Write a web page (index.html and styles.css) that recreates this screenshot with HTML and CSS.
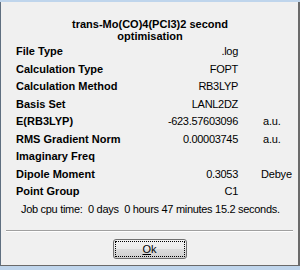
FILE: index.html
```html
<!DOCTYPE html>
<html>
<head>
<meta charset="utf-8">
<link rel="stylesheet" href="styles.css">
</head>
<body>
<div class="window">
  <div class="title">trans-Mo(CO)4(PCl3)2 second<br>optimisation</div>
  <div class="grid">
    <div class="label">File Type</div><div class="value">.log</div><div class="unit"></div>
    <div class="label">Calculation Type</div><div class="value">FOPT</div><div class="unit"></div>
    <div class="label">Calculation Method</div><div class="value">RB3LYP</div><div class="unit"></div>
    <div class="label">Basis Set</div><div class="value">LANL2DZ</div><div class="unit"></div>
    <div class="label">E(RB3LYP)</div><div class="value">-623.57603096</div><div class="unit au">a.u.</div>
    <div class="label">RMS Gradient Norm</div><div class="value">0.00003745</div><div class="unit au">a.u.</div>
    <div class="label">Imaginary Freq</div><div class="value"></div><div class="unit"></div>
    <div class="label">Dipole Moment</div><div class="value">0.3053</div><div class="unit">Debye</div>
    <div class="label">Point Group</div><div class="value">C1</div><div class="unit"></div>
    <div class="job">Job cpu time:&nbsp; 0 days&nbsp; 0 hours 47 minutes 15.2 seconds.</div>
  </div>
  <div class="sep"></div>
  <div class="actions">
    <button class="btn"><span class="focus"><u>O</u>k</span></button>
  </div>
</div>
</body>
</html>
```

FILE: styles.css
```css
html, body {
  margin: 0;
  padding: 0;
}
body {
  background: #bfd5ec;
  width: 300px;
  height: 270px;
  overflow: hidden;
  font-family: "Liberation Sans", Arial, sans-serif;
  font-size: 11px;
  color: #000;
}
.window {
  margin-top: 2px;
  box-sizing: border-box;
  height: 264px;
  background: #f0f0f0;
  border-left: 1px solid #5f6f80;
  border-right: 2px solid #6a6a6a;
  border-bottom: 1px solid #6a6a6a;
  padding-top: 16px;
}
.title {
  font-weight: bold;
  text-align: center;
  line-height: 12px;
  padding-left: 1px;
}
.grid {
  margin-top: 1px;
  display: grid;
  grid-template-columns: 107px 92px 1fr;
  column-gap: 23px;
  padding-left: 15px;
  line-height: 17.5px;
  white-space: nowrap;
}
.label {
  font-weight: bold;
}
.value {
  text-align: right;
  letter-spacing: -0.3px;
}
.unit {
  letter-spacing: -0.2px;
}
.unit.au {
  padding-left: 2px;
}
.job {
  grid-column: 1 / -1;
  padding-left: 5px;
  letter-spacing: -0.3px;
}
.sep {
  margin: 12px 5px 0 5px;
  height: 0;
  border-top: 1px solid #a0a0a0;
  border-bottom: 1px solid #ffffff;
}
.actions {
  display: flex;
  justify-content: center;
  padding-top: 7px;
}
.btn {
  width: 74px;
  height: 20px;
  padding: 0;
  border: 1px solid #707070;
  border-radius: 3px;
  background: linear-gradient(#f2f2f2 0%, #ebebeb 50%, #dddddd 51%, #cfcfcf 100%);
  font-family: "Liberation Sans", Arial, sans-serif;
  font-size: 11px;
  color: #000;
  display: flex;
  align-items: stretch;
  justify-content: stretch;
}
.focus {
  flex: 1;
  margin: 1px;
  border: 1px dotted #000;
  display: flex;
  align-items: center;
  justify-content: center;
  line-height: 12px;
}
.focus u {
  text-decoration: underline;
}
```
